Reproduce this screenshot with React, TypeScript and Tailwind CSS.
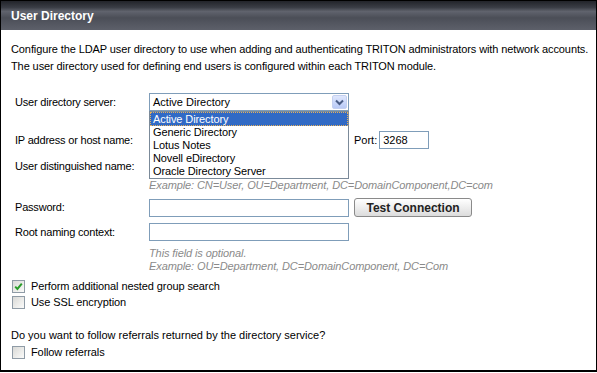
import React from 'react'

const options = ['Active Directory', 'Generic Directory', 'Lotus Notes', 'Novell eDirectory', 'Oracle Directory Server']

function Checkbox({ checked, label }: { checked?: boolean; label: string }) {
  return (
    <div className="flex items-center h-[16px]">
      <div className="ml-[1px] w-[13px] h-[13px] border border-[#8f9ba6] bg-gradient-to-br from-[#d9d9d6] to-[#fbfbfa] flex items-center justify-center">
        {checked && (
          <svg width="11" height="11" viewBox="0 0 11 11">
            <path d="M2.2 5.6 L4.4 7.9 L8.8 2.6" stroke="#2a9d2a" strokeWidth="2" fill="none" />
          </svg>
        )}
      </div>
      <span className="ml-[6px] tracking-[-0.1px]">{label}</span>
    </div>
  )
}

function TextInput({ width = 'w-[200px]', value }: { width?: string; value?: string }) {
  return (
    <div className={`${width} h-[18px] border border-[#7f9db9] bg-white flex items-center pl-[3px]`}>
      {value}
    </div>
  )
}

export default function App() {
  return (
    <div className="w-[597px] h-[373px] bg-white font-['Liberation_Sans',Arial,sans-serif] text-[11px] text-black">
      <div className="w-[597px] h-[372px] border border-black border-b-2 flex flex-col overflow-hidden">
        {/* header */}
        <div className="shrink-0 h-[29px] flex items-center pl-[10px] bg-[linear-gradient(to_bottom,#22242a_0%,#3a3d45_22%,#60636d_36%,#4b4e57_58%,#5d606a_100%)]">
          <span className="text-white font-bold text-[12px]">User Directory</span>
        </div>

        <div className="flex flex-col pl-[10px] shrink-0">
          <p className="mt-[11px] leading-[17px] whitespace-nowrap">
            <span className="tracking-[-0.1px]">
              Configure the LDAP user directory to use when adding and authenticating TRITON administrators with network accounts.
            </span>
            <br />
            <span className="tracking-[-0.1px]">
              The user directory used for defining end users is configured within each TRITON module.
            </span>
          </p>

          <div className="flex flex-col pl-[4px]">
            {/* server select */}
            <div className="flex items-center h-[18px] mt-[18px]">
              <span className="w-[134px] tracking-[-0.2px]">User directory server:</span>
              <div className="relative z-10 w-[200px] h-[18px]">
                <div className="w-[200px] h-[18px] border border-[#7f9db9] bg-white flex items-center justify-between pl-[3px] pr-[1px]">
                  <span>Active Directory</span>
                  <div className="w-[15px] h-[14px] rounded-[2px] border border-[#c4d0f0] bg-gradient-to-b from-[#dfe7fd] to-[#b9caf6] flex items-center justify-center">
                    <svg width="9" height="7" viewBox="0 0 9 7">
                      <path d="M1 1.5 L4.5 5 L8 1.5" stroke="#4a5d86" strokeWidth="2" fill="none" />
                    </svg>
                  </div>
                </div>
                <div className="absolute left-0 top-[18px] w-[200px] h-[68px] border border-[#7b8a99] bg-white flex flex-col">
                  {options.map((o, i) => (
                    <div
                      key={o}
                      className={
                        i === 0
                          ? 'h-[14px] leading-[12px] pl-[2px] bg-[#316ac5] text-white border border-dotted border-[#e6b05a] tracking-[-0.1px]'
                          : 'h-[13px] leading-[13px] pl-[3px] tracking-[-0.1px]'
                      }
                    >
                      {o}
                    </div>
                  ))}
                </div>
              </div>
            </div>

            {/* IP */}
            <div className="flex items-center h-[18px] mt-[20px]">
              <span className="w-[134px] tracking-[-0.2px]">IP address or host name:</span>
              <TextInput />
              <span className="ml-[5px]">Port:</span>
              <div className="ml-[2px]">
                <TextInput width="w-[50px]" value="3268" />
              </div>
            </div>

            {/* DN */}
            <div className="flex items-center h-[18px] mt-[8px]">
              <span className="w-[134px] tracking-[-0.2px]">User distinguished name:</span>
              <TextInput />
            </div>
            <div className="ml-[134px] mt-[4px] leading-[13px] italic text-[#8a8a8a] tracking-[-0.1px]">
              Example: CN=User, OU=Department, DC=DomainComponent,DC=com
            </div>

            {/* Password */}
            <div className="flex items-center h-[19px] mt-[6px]">
              <span className="w-[134px] tracking-[-0.2px]">Password:</span>
              <TextInput />
              <button className="ml-[5px] w-[118px] h-[19px] rounded-[3px] border border-[#8a8a8a] bg-gradient-to-b from-[#ffffff] to-[#dcdcdc] font-bold text-[12px] text-[#222]">
                Test Connection
              </button>
            </div>

            {/* Root */}
            <div className="flex items-center h-[18px] mt-[6px]">
              <span className="w-[134px] tracking-[-0.2px]">Root naming context:</span>
              <TextInput />
            </div>
            <div className="ml-[134px] mt-[6px] leading-[13px] italic text-[#8a8a8a] tracking-[-0.1px]">
              This field is optional.
              <br />
              Example: OU=Department, DC=DomainComponent, DC=Com
            </div>
          </div>

          <div className="mt-[5px] flex flex-col">
            <Checkbox checked label="Perform additional nested group search" />
            <Checkbox label="Use SSL encryption" />
          </div>

          <p className="mt-[17px] leading-[17px]">Do you want to follow referrals returned by the directory service?</p>
          <Checkbox label="Follow referrals" />
        </div>
      </div>
    </div>
  )
}
